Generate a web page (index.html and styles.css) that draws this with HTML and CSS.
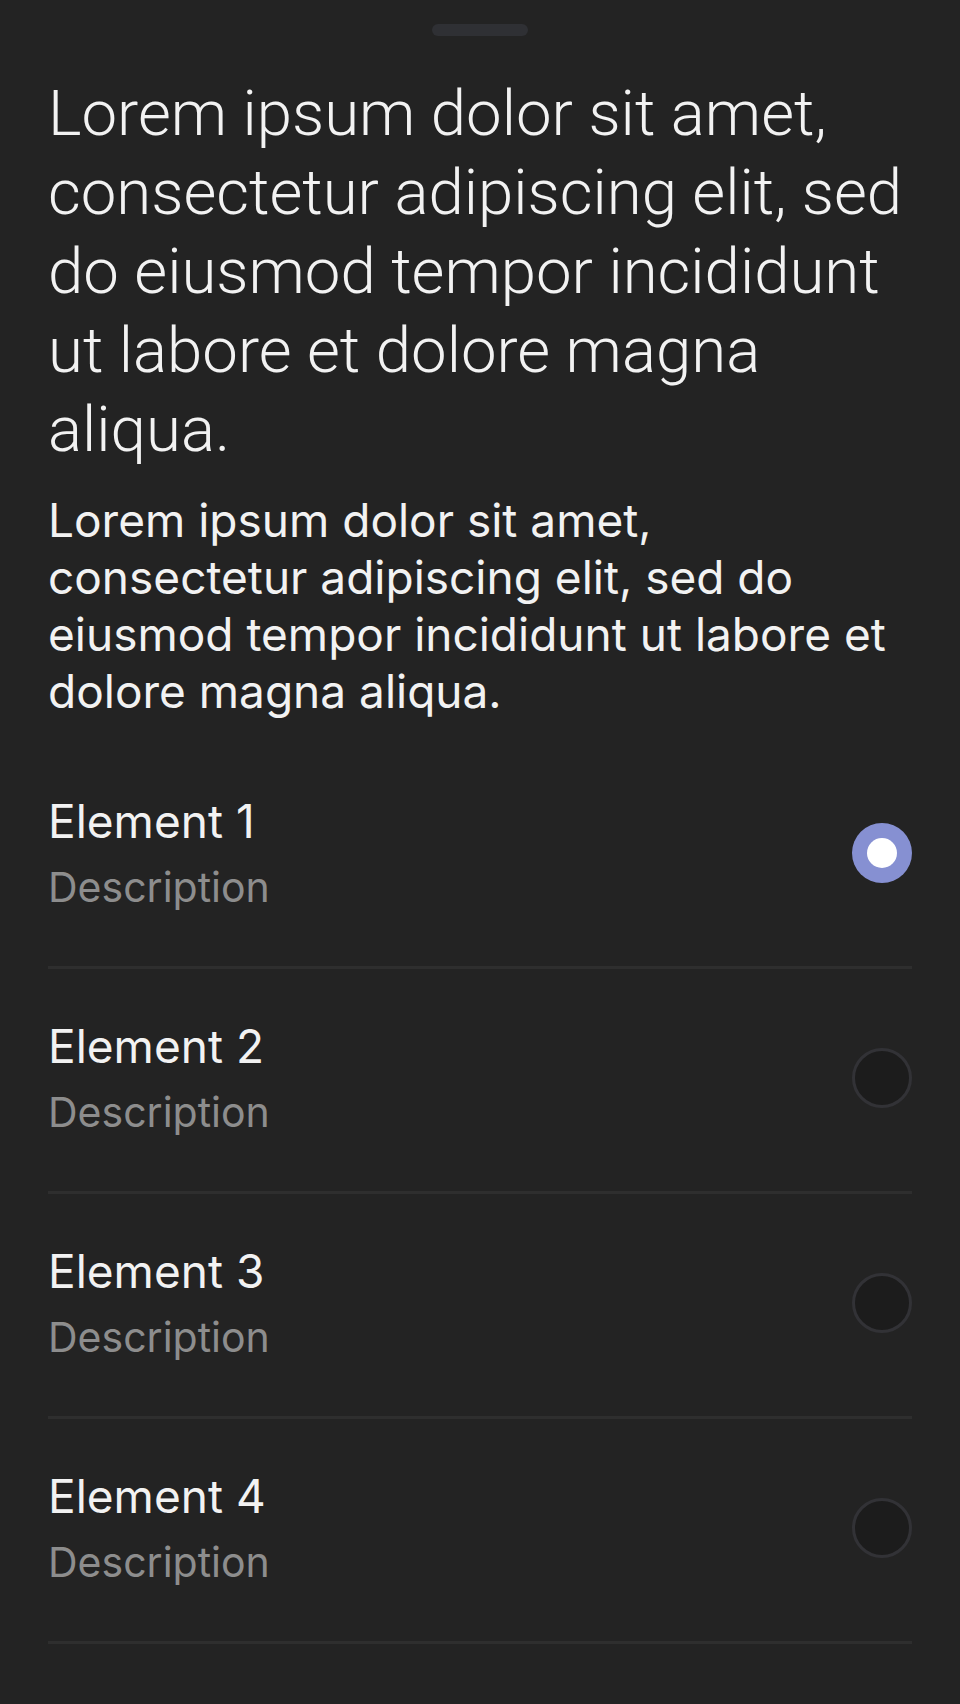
FILE: index.html
```html
<!DOCTYPE html>
<html lang="en">
<head>
<meta charset="utf-8">
<title>Sheet</title>
<link rel="stylesheet" href="styles.css">
</head>
<body>
<div class="sheet">
  <div class="handle"></div>
  <div class="content">
    <h1 class="title">Lorem ipsum dolor sit amet, consectetur adipiscing elit, sed do eiusmod tempor incididunt ut labore et dolore magna aliqua.</h1>
    <p class="body">Lorem ipsum dolor sit amet, consectetur adipiscing elit, sed do eiusmod tempor incididunt ut labore et dolore magna aliqua.</p>
    <ul class="list">
      <li class="row">
        <div class="text"><div class="name">Element 1</div><div class="desc">Description</div></div>
        <span class="radio on"></span>
      </li>
      <li class="row">
        <div class="text"><div class="name">Element 2</div><div class="desc">Description</div></div>
        <span class="radio"></span>
      </li>
      <li class="row">
        <div class="text"><div class="name">Element 3</div><div class="desc">Description</div></div>
        <span class="radio"></span>
      </li>
      <li class="row">
        <div class="text"><div class="name">Element 4</div><div class="desc">Description</div></div>
        <span class="radio"></span>
      </li>
      <li class="row">
        <div class="text"><div class="name">Element 5</div><div class="desc">Description</div></div>
        <span class="radio"></span>
      </li>
    </ul>
  </div>
</div>
</body>
</html>
```
FILE: styles.css
```css
html, body {
  margin: 0;
  padding: 0;
  background: #232323;
}
body {
  height: 1704px;
  overflow: hidden;
  font-family: Inter, "Noto Sans", sans-serif;
  color: #f2f2f2;
}
.sheet {
  display: flex;
  flex-direction: column;
}
.handle {
  width: 96px;
  height: 12px;
  border-radius: 6px;
  background: #2f3034;
  margin: 24px auto 0;
}
.content {
  padding: 0 48px;
}
.title {
  margin: 38px 0 0;
  font-family: Roboto, Inter, sans-serif;
  font-size: 63.5px;
  line-height: 79px;
  font-weight: 300;
}
.body {
  margin: 23px 0 0;
  font-size: 46px;
  line-height: 57px;
  font-weight: 400;
}
.list {
  list-style: none;
  margin: 24px 0 0;
  padding: 0;
}
.row {
  display: flex;
  align-items: center;
  justify-content: space-between;
  padding: 49px 0 53px;
  border-bottom: 3px solid #2e2e2e;
}
.name {
  font-size: 46px;
  line-height: 56px;
}
.desc {
  margin-top: 12px;
  font-size: 41px;
  line-height: 52px;
  color: #8d8d8d;
}
.radio {
  box-sizing: border-box;
  width: 60px;
  height: 60px;
  border-radius: 50%;
  background: #1c1c1c;
  border: 3px solid #323236;
  flex: none;
}
.radio.on {
  background: #8690d2;
  border: none;
  display: flex;
  align-items: center;
  justify-content: center;
}
.radio.on::after {
  content: "";
  width: 30px;
  height: 30px;
  border-radius: 50%;
  background: #ffffff;
}
```
